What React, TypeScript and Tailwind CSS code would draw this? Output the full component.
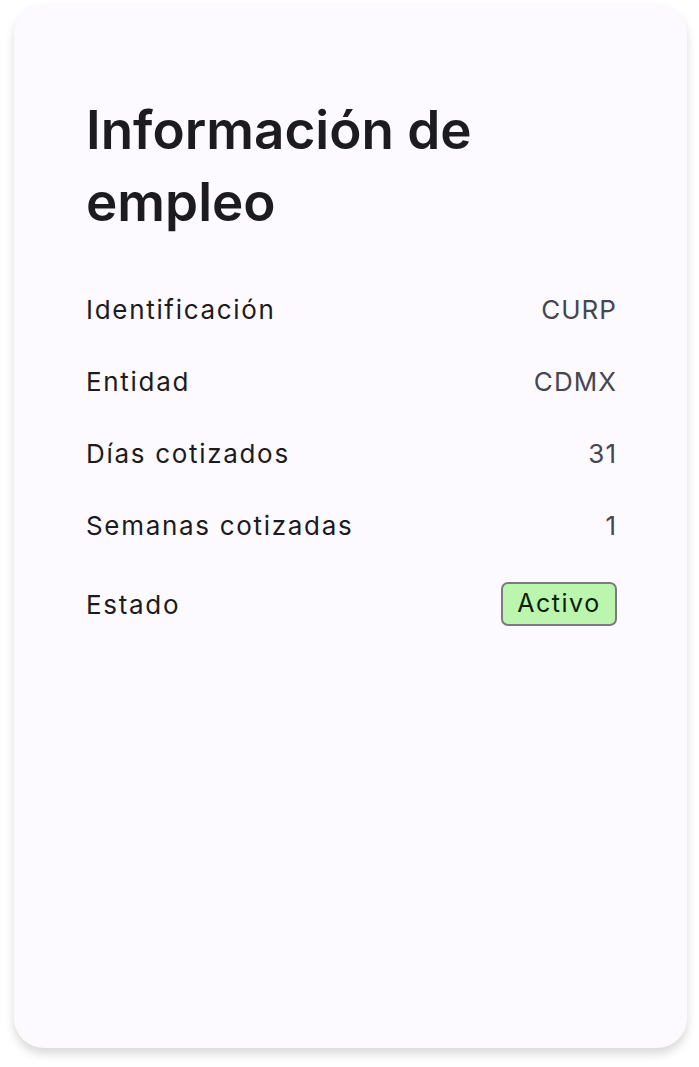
import React from 'react';

const rows = [
  { label: 'Identificación', value: 'CURP' },
  { label: 'Entidad', value: 'CDMX' },
  { label: 'Días cotizados', value: '31' },
  { label: 'Semanas cotizadas', value: '1' },
];

const App: React.FC = () => {
  return (
    <div className="min-h-screen bg-white pl-[14px] pr-[12px] pt-[4px] font-['Inter',sans-serif]">
      <div className="h-[1044px] rounded-[30px] bg-[#fcfaff] pl-[72px] pr-[70px] pt-[90px] shadow-[0_6px_10px_rgba(0,0,0,0.15)]">
        <h1 className="text-[53px] font-semibold leading-[72px] text-[#1c1b20]">Información de empleo</h1>
        <div className="mt-[35px] flex flex-col">
          {rows.map((r) => (
            <div key={r.label} className="flex h-[72px] items-center justify-between text-[26px] tracking-[0.065em]">
              <span className="text-[#1c1b20]">{r.label}</span>
              <span className="tracking-[0.04em] text-[#46464f]">{r.value}</span>
            </div>
          ))}
          <div className="flex h-[86px] items-center justify-between text-[26px] tracking-[0.065em]">
            <span className="text-[#1c1b20]">Estado</span>
            <span className="flex h-[44px] w-[116px] items-center justify-center rounded-[7px] border-2 border-[#7b7a82] bg-[#bcf5ad] text-[25px] tracking-[0.06em] text-[#0c1f0a]">
              Activo
            </span>
          </div>
        </div>
      </div>
    </div>
  );
};

export default App;
